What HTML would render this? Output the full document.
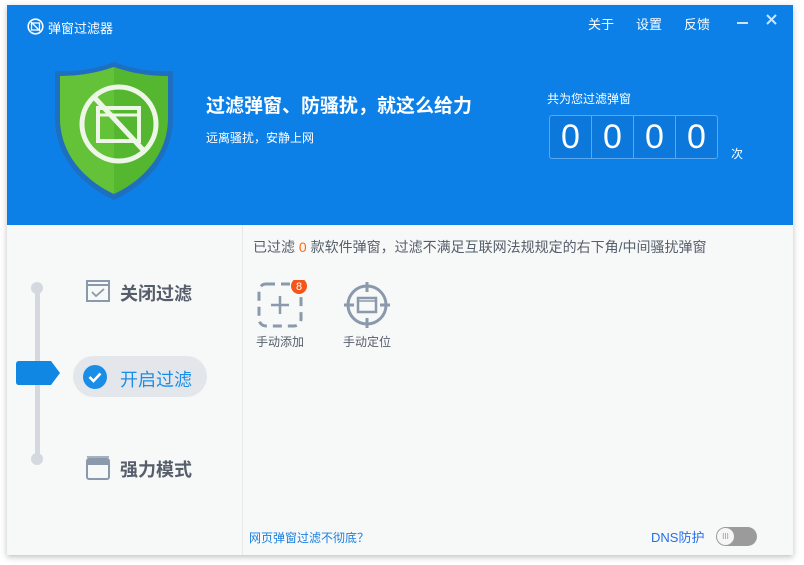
<!DOCTYPE html>
<html><head><meta charset="utf-8"><style>
*{margin:0;padding:0;box-sizing:border-box}
body{width:804px;height:565px;background:#fff;font-family:"Liberation Sans","Noto Sans CJK SC",sans-serif;position:relative;overflow:hidden}
.win{position:absolute;left:7px;top:5px;width:786px;height:550px;background:#f7f8f8;box-shadow:0 2px 6px rgba(0,0,0,.25)}
.hdr{position:absolute;left:0;top:0;width:786px;height:220px;background:#0d80e8;color:#fff}
.abs{position:absolute}
.side{position:absolute;left:0;top:220px;width:236px;height:330px;border-right:1px solid #e6e8ea}
</style></head><body>
<div class="win">
 <div class="hdr">
  <svg class="abs" style="left:20px;top:13px" width="17" height="17" viewBox="0 0 17 17"><circle cx="8.5" cy="8.5" r="7.3" fill="none" stroke="#fff" stroke-width="1.6"/><rect x="4.5" y="5" width="8" height="7" fill="none" stroke="#fff" stroke-width="1.3"/><line x1="4" y1="4" x2="13" y2="13" stroke="#fff" stroke-width="1.3"/></svg>
  <div class="abs" style="left:41px;top:13px;font-size:13px">弹窗过滤器</div>
  <div class="abs" style="left:581px;top:9px;font-size:13px">关于</div>
  <div class="abs" style="left:629px;top:9px;font-size:13px">设置</div>
  <div class="abs" style="left:677px;top:9px;font-size:13px">反馈</div>
  <div class="abs" style="left:730px;top:17px;width:11px;height:2px;background:#cfe4fb"></div>
  <svg class="abs" style="left:759px;top:9px" width="11" height="11"><path d="M1 1L10 10M10 1L1 10" stroke="#cfe4fb" stroke-width="2"/></svg>
  <svg class="abs" style="left:46px;top:53px" width="122" height="146" viewBox="0 0 122 146">
   <path d="M61 4 C40 12 20 14 2 13 L2 60 C2 100 30 128 61 142 C92 128 120 100 120 60 L120 13 C102 14 82 12 61 4Z" fill="#1f6fc0"/>
   <path d="M61 9 C41 16 23 18 7 18 L7 60 C7 97 33 123 61 136 C89 123 115 97 115 60 L115 18 C99 18 81 16 61 9Z" fill="#55b630"/>
   <path d="M61 9 C41 16 23 18 7 18 L7 60 C7 97 33 123 61 136Z" fill="#63c237"/>
   <circle cx="66" cy="66" r="37" fill="none" stroke="#eef6e8" stroke-width="5"/>
   <rect x="45" y="50" width="41" height="33" fill="none" stroke="#eef6e8" stroke-width="4"/>
   <line x1="45" y1="57" x2="86" y2="57" stroke="#eef6e8" stroke-width="3"/>
   <line x1="41" y1="39" x2="92" y2="94" stroke="#eef6e8" stroke-width="5"/>
  </svg>
  <div class="abs" style="left:199px;top:86px;font-size:19px;font-weight:bold">过滤弹窗、防骚扰，就这么给力</div>
  <div class="abs" style="left:199px;top:124px;font-size:12px">远离骚扰，安静上网</div>
  <div class="abs" style="left:540px;top:85px;font-size:12px">共为您过滤弹窗</div>
  <div class="abs" style="left:542px;top:110px;width:169px;height:44px;border:1px solid #5aa9f0;border-radius:3px;display:flex;background:#0c78dc">
   <div style="flex:1;border-right:1px solid #5aa9f0;text-align:center;font-size:34px;line-height:42px;font-weight:300">0</div>
   <div style="flex:1;border-right:1px solid #5aa9f0;text-align:center;font-size:34px;line-height:42px">0</div>
   <div style="flex:1;border-right:1px solid #5aa9f0;text-align:center;font-size:34px;line-height:42px">0</div>
   <div style="flex:1;text-align:center;font-size:34px;line-height:42px">0</div>
  </div>
  <div class="abs" style="left:724px;top:140px;font-size:12px">次</div>
 </div>
 <div class="side">
  <div class="abs" style="left:28px;top:62px;width:5px;height:172px;background:#d4d9e0;border-radius:3px"></div>
  <div class="abs" style="left:24px;top:57px;width:12px;height:12px;border-radius:50%;background:#d4d9e0"></div>
  <div class="abs" style="left:24px;top:228px;width:12px;height:12px;border-radius:50%;background:#d4d9e0"></div>
  <svg class="abs" style="left:8px;top:135px" width="46" height="26"><path d="M4 1 H36 L45 13 L36 25 H4 Q1 25 1 22 V4 Q1 1 4 1Z" fill="#1187e4"/></svg>
  <svg class="abs" style="left:79px;top:55px" width="24" height="22"><rect x="1" y="1" width="22" height="20" fill="none" stroke="#8a99ab" stroke-width="2"/><line x1="1" y1="5" x2="23" y2="5" stroke="#8a99ab" stroke-width="2"/><path d="M6 12 L10 16 L18 9" fill="none" stroke="#8a99ab" stroke-width="1.8"/></svg>
  <div class="abs" style="left:113px;top:55px;font-size:18px;font-weight:bold;color:#555e6a">关闭过滤</div>
  <div class="abs" style="left:66px;top:131px;width:134px;height:41px;border-radius:21px;background:#e3e7ec"></div>
  <svg class="abs" style="left:76px;top:140px" width="24" height="24"><circle cx="12" cy="12" r="12" fill="#1a8de6"/><path d="M6.5 12 L10.5 16 L17.5 8.5" fill="none" stroke="#fff" stroke-width="2.6"/></svg>
  <div class="abs" style="left:113px;top:141px;font-size:18px;color:#1a8de6">开启过滤</div>
  <svg class="abs" style="left:79px;top:231px" width="24" height="24"><rect x="1" y="3" width="22" height="20" rx="2" fill="none" stroke="#8a99ab" stroke-width="2"/><line x1="1" y1="1" x2="23" y2="1" stroke="#8a99ab" stroke-width="1.5"/><line x1="1" y1="8" x2="23" y2="8" stroke="#8a99ab" stroke-width="2"/><rect x="1" y="3" width="22" height="5" fill="#8a99ab"/></svg>
  <div class="abs" style="left:113px;top:231px;font-size:18px;font-weight:bold;color:#555e6a">强力模式</div>
 </div>
 <div class="abs" style="left:246px;top:232px;font-size:14px;color:#555e6a">已过滤 <span style="color:#ff6a1a">0</span> 款软件弹窗，过滤不满足互联网法规规定的右下角/中间骚扰弹窗</div>
 <svg class="abs" style="left:250px;top:275px" width="50" height="50"><rect x="2" y="4" width="42" height="42" rx="7" fill="none" stroke="#8a99ab" stroke-width="3" stroke-dasharray="9 6"/><path d="M23 16V34M14 25H32" stroke="#8a99ab" stroke-width="2.5"/><circle cx="42" cy="6" r="8" fill="#f3561c"/><text x="42" y="10" font-size="11" fill="#fff" text-anchor="middle" font-family="Liberation Sans">8</text></svg>
 <div class="abs" style="left:249px;top:328px;font-size:12px;color:#555e6a">手动添加</div>
 <svg class="abs" style="left:337px;top:277px" width="48" height="48"><circle cx="23" cy="23" r="19" fill="none" stroke="#8a99ab" stroke-width="3"/><path d="M23 0V10M23 36V46M0 23H10M36 23H46" stroke="#8a99ab" stroke-width="3"/><rect x="14" y="16" width="18" height="14" fill="none" stroke="#8a99ab" stroke-width="2.5"/><line x1="14" y1="19" x2="32" y2="19" stroke="#8a99ab" stroke-width="1.5"/></svg>
 <div class="abs" style="left:336px;top:328px;font-size:12px;color:#555e6a">手动定位</div>
 <div class="abs" style="left:242px;top:524px;font-size:12px;color:#1a7fe0">网页弹窗过滤不彻底？</div>
 <div class="abs" style="left:644px;top:522px;font-size:13px;color:#2670e6">DNS防护</div>
 <div class="abs" style="left:709px;top:522px;width:41px;height:19px;border-radius:10px;background:#9b9b9b"></div>
 <div class="abs" style="left:710px;top:523px;width:17px;height:17px;border-radius:50%;background:#f6f6f6;font-size:8px;color:#999;text-align:center;line-height:17px">III</div>
</div>
</body></html>
